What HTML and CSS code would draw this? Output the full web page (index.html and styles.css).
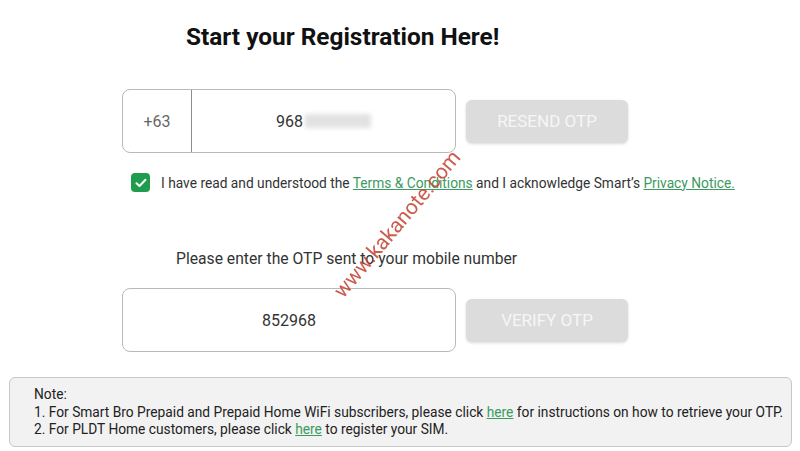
FILE: index.html
```html
<!DOCTYPE html>
<html lang="en">
<head>
  <meta charset="UTF-8" />
  <title>Registration</title>
  <link rel="stylesheet" href="styles.css">
</head>
<body>

<h2 class="title">Start your Registration Here!</h2>

<!-- Mobile number -->
<div class="field-row phone-row">
  <div class="field-box">
    <span class="prefix">+63</span>
    <span class="number">968<span class="blur"></span></span>
  </div>
  <button class="otp-btn" disabled>RESEND OTP</button>
</div>

<div class="consent">
  <span class="check">
    <svg width="12" height="10" viewBox="0 0 12 10"><path d="M1.5 5.2 L4.5 8 L10.5 1.8" fill="none" stroke="#fff" stroke-width="2" stroke-linecap="round" stroke-linejoin="round"/></svg>
  </span>
  <p>I have read and understood the <a href="#">Terms &amp; Conditions</a> and I acknowledge Smart’s <a href="#">Privacy Notice.</a></p>
</div>

<p class="otp-label">Please enter the OTP sent to your mobile number</p>

<!-- OTP -->
<div class="field-row otp-row">
  <div class="field-box">
    <span class="code">852968</span>
  </div>
  <button class="otp-btn" disabled>VERIFY OTP</button>
</div>

<div class="note">
  <p>Note:</p>
  <p>1. For Smart Bro Prepaid and Prepaid Home WiFi subscribers, please click <a href="#">here</a> for instructions on how to retrieve your OTP.</p>
  <p>2. For PLDT Home customers, please click <a href="#">here</a> to register your SIM.</p>
</div>

<div class="watermark">www.kakanote.com</div>

</body>
</html>
```

FILE: styles.css
```css
body {
  margin: 0;
  font-family: Roboto, "Liberation Sans", sans-serif;
  background: #fff;
  color: #222;
  position: relative;
  width: 800px;
  height: 451px;
  overflow: hidden;
}
.title {
  margin: 22px 0 0 186px;
  font-size: 24.4px;
  line-height: 30px;
  font-weight: bold;
  color: #111;
}
.field-row {
  display: flex;
  align-items: center;
  gap: 10px;
  margin-left: 122px;
}
.phone-row {
  margin-top: 37px;
}
.field-box {
  display: flex;
  width: 334px;
  height: 64px;
  box-sizing: border-box;
  border: 1px solid #b9b9b9;
  border-radius: 8px;
  background: #fff;
}
.prefix {
  width: 68px;
  border-right: 1px solid #8c8c8c;
  display: flex;
  align-items: center;
  justify-content: center;
  color: #666;
  font-size: 16px;
}
.number, .code {
  flex: 1;
  display: flex;
  align-items: center;
  justify-content: center;
  font-size: 16px;
  color: #333;
}
.blur {
  display: inline-block;
  width: 66px;
  height: 14px;
  margin-left: 2px;
  background: #e2e2e2;
  filter: blur(2px);
}
.otp-btn {
  width: 162px;
  height: 43px;
  border: none;
  border-radius: 6px;
  background: #dcdcdc;
  color: #f6f6f6;
  font-family: inherit;
  font-size: 17px;
  box-shadow: 0 1px 3px rgba(0,0,0,0.15);
}
.consent {
  display: flex;
  align-items: center;
  gap: 11px;
  margin: 20px 0 0 131px;
}
.check {
  width: 19px;
  height: 19px;
  border-radius: 4px;
  background: #1f9d4c;
  display: flex;
  align-items: center;
  justify-content: center;
}
.consent p {
  margin: 0;
  font-size: 13.75px;
  color: #333;
}
a {
  color: #3c9a5f;
}
.otp-label {
  margin: 57px 0 0 176px;
  font-size: 15.7px;
  color: #333;
}
.otp-row {
  margin-top: 20px;
}
.note {
  margin: 25px 8px 0 9px;
  padding: 8px 2px 7px 24px;
  background: #f2f2f2;
  border: 1px solid #c8c8c8;
  border-radius: 6px;
  font-size: 13.75px;
  line-height: 17.5px;
  color: #222;
  white-space: nowrap;
}
.note p {
  margin: 0;
}
.watermark {
  position: absolute;
  left: 305px;
  top: 212px;
  font-size: 21px;
  color: #c4402f;
  transform: rotate(-50deg);
  transform-origin: center;
  opacity: 0.85;
}
```
